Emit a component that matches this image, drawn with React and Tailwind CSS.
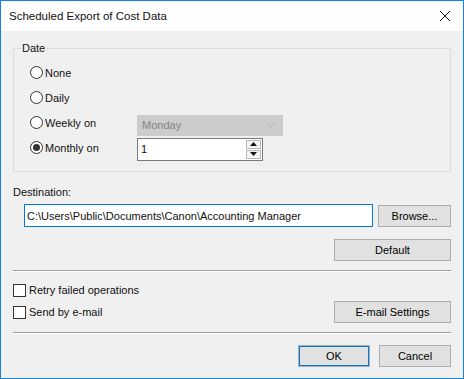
import React from "react";

const Radio = ({ checked, label }) => (
  <div className="flex w-[107px] items-center">
    <span className="flex h-[13px] w-[13px] items-center justify-center rounded-full border border-[#333333] bg-white">
      {checked && <span className="h-[7px] w-[7px] rounded-full bg-[#333333]" />}
    </span>
    <span className="ml-[2px]">{label}</span>
  </div>
);

const Checkbox = ({ label }) => (
  <div className="flex items-center">
    <span className="h-[13px] w-[13px] border border-[#333333] bg-white" />
    <span className="ml-[3px]">{label}</span>
  </div>
);

const Button = ({ children, className = "" }) => (
  <button
    className={
      "flex h-[22px] items-center justify-center border border-[#adadad] bg-[#e1e1e1] text-black " +
      className
    }
  >
    {children}
  </button>
);

const Separator = () => (
  <div className="border-t border-b border-t-[#a0a0a0] border-b-white" />
);

export default function App() {
  return (
    <div
      className="flex h-[379px] w-[464px] flex-col border border-[#1883d7] bg-[#f0f0f0] text-[11px] leading-[14px] text-[#111]"
      style={{ fontFamily: '"Liberation Sans", Arial, sans-serif' }}
    >
      {/* title bar */}
      <div className="flex h-[30px] shrink-0 items-center justify-between bg-white pl-[8px] pr-[10px]">
        <span className="text-[11.5px]">Scheduled Export of Cost Data</span>
        <svg width="12" height="12" viewBox="0 0 12 12" className="mr-[2px]">
          <path d="M1 1 L11 11 M11 1 L1 11" stroke="#111" strokeWidth="1" />
        </svg>
      </div>

      <div className="flex flex-1 flex-col px-[12px] pt-[10px]">
        {/* Date group */}
        <fieldset className="border border-[#dcdcdc] pb-[11px] pl-[16px] pr-[8px]">
          <legend className="ml-[-9px] px-[1px]">Date</legend>
          <div className="mt-[5px] flex h-[25px] items-center">
            <Radio label="None" />
          </div>
          <div className="flex h-[25px] items-center">
            <Radio label="Daily" />
          </div>
          <div className="flex h-[25px] items-center">
            <Radio label="Weekly on" />
            <div className="mt-[5px] flex h-[21px] w-[146px] items-center justify-between border border-[#cccccc] bg-[#cccccc] pl-[4px] pr-[6px] text-[#838383]">
              <span>Monday</span>
              <svg width="10" height="6" viewBox="0 0 10 6">
                <path d="M0.5 0.5 L5 5 L9.5 0.5" fill="none" stroke="#b4b4b4" strokeWidth="1" />
              </svg>
            </div>
          </div>
          <div className="flex h-[25px] items-center">
            <Radio checked label="Monthly on" />
            <div className="mt-[3px] flex h-[23px] w-[126px] items-center border border-[#7a7a7a] bg-white pl-[3px] pr-[1px]">
              <span className="flex-1">1</span>
              <div className="flex flex-col gap-[1px]">
                <span className="flex h-[9px] w-[15px] items-center justify-center border border-[#b9b9b9] bg-[#f3f3f3]">
                  <svg width="7" height="4" viewBox="0 0 7 4">
                    <path d="M3.5 0 L7 4 L0 4 Z" fill="#111" />
                  </svg>
                </span>
                <span className="flex h-[9px] w-[15px] items-center justify-center border border-[#b9b9b9] bg-[#f3f3f3]">
                  <svg width="7" height="4" viewBox="0 0 7 4">
                    <path d="M0 0 L7 0 L3.5 4 Z" fill="#111" />
                  </svg>
                </span>
              </div>
            </div>
          </div>
        </fieldset>

        {/* Destination */}
        <div className="mt-[13px]">Destination:</div>
        <div className="mt-[5px] flex items-center">
          <div className="ml-[11px] flex h-[23px] w-[349px] items-center border border-[#0078d7] bg-white pl-[2px]">
            C:\Users\Public\Documents\Canon\Accounting Manager
          </div>
          <Button className="ml-[5px] w-[73px]">Browse...</Button>
        </div>
        <div className="mt-[12px] flex justify-end">
          <Button className="w-[117px]">Default</Button>
        </div>

        <div className="mt-[9px]">
          <Separator />
        </div>

        <div className="mt-[11px] flex flex-col">
          <Checkbox label="Retry failed operations" />
          <div className="mt-[4px] flex items-center justify-between">
            <Checkbox label="Send by e-mail" />
            <Button className="w-[117px]">E-mail Settings</Button>
          </div>
        </div>

        <div className="mt-[9px]">
          <Separator />
        </div>

        <div className="mt-[11px] flex justify-end gap-[9px]">
          <Button className="w-[72px] border-[#0078d7] shadow-[inset_0_0_0_1px_#0078d7]">OK</Button>
          <Button className="w-[72px]">Cancel</Button>
        </div>
      </div>
    </div>
  );
}
